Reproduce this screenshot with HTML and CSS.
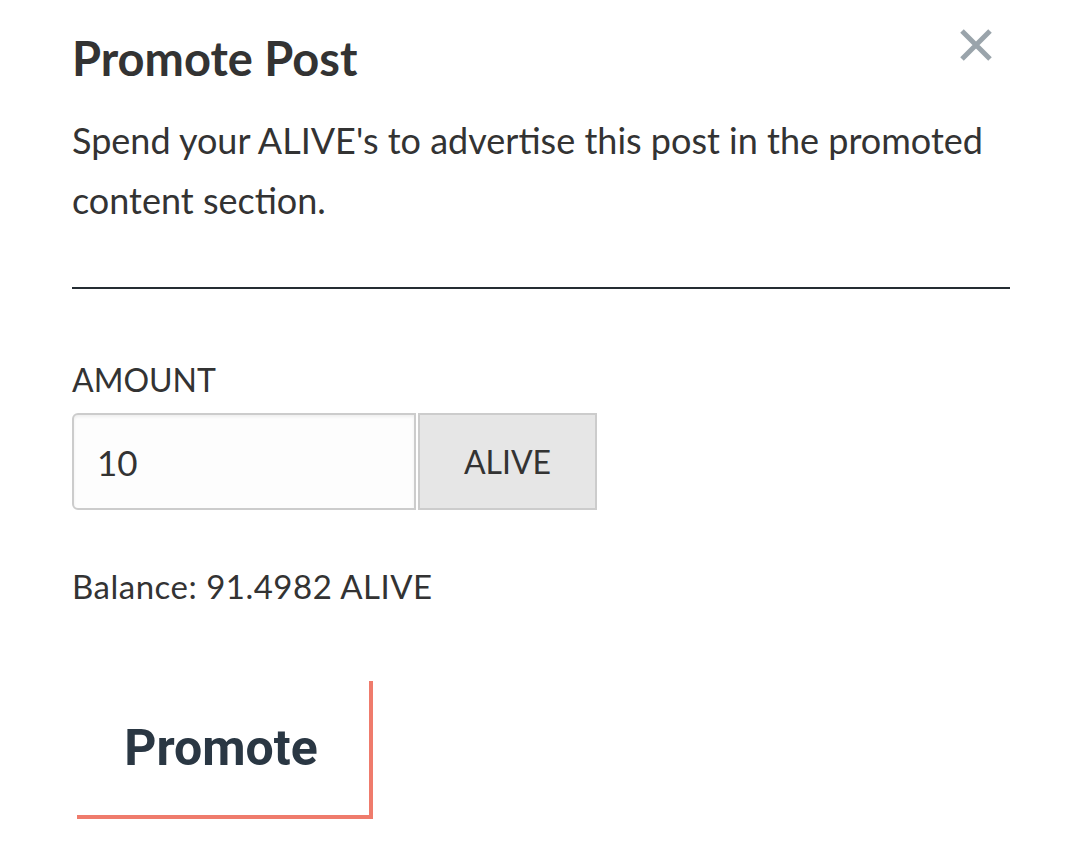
FILE: index.html
```html
<!DOCTYPE html>
<html>
<head>
<meta charset="utf-8">
<link rel="stylesheet" href="styles.css">
</head>
<body>
<div class="modal">
  <div class="header">
    <h1 class="title">Promote Post</h1>
    <button class="close" aria-label="Close">
      <svg width="34" height="34" viewBox="0 0 34 34"><path d="M3 3 L31 31 M31 3 L3 31" stroke="#9aa4ab" stroke-width="5" stroke-linecap="butt"/></svg>
    </button>
  </div>
  <p class="desc">Spend your ALIVE's to advertise this post in the promoted content section.</p>
  <hr class="divider">
  <label class="label">AMOUNT</label>
  <div class="input-group">
    <div class="input">10</div>
    <div class="addon">ALIVE</div>
  </div>
  <p class="balance">Balance: 91.4982 ALIVE</p>
  <div class="btn-wrap">
    <button class="promote">Promote</button>
  </div>
</div>
</body>
</html>
```
FILE: styles.css
```css
html, body {
  margin: 0;
  padding: 0;
  background: #ffffff;
}
body {
  font-family: "Lato", "Liberation Sans", sans-serif;
  color: #333333;
}
.modal {
  padding: 0 70px 0 72px;
  display: flex;
  flex-direction: column;
  align-items: flex-start;
}
.header {
  align-self: stretch;
  display: flex;
  justify-content: space-between;
  align-items: flex-start;
}
.title {
  margin: 28px 0 0 0;
  font-size: 47px;
  line-height: 60px;
  font-weight: 700;
  color: #333333;
}
.close {
  margin: 28px 17px 0 0;
  padding: 0;
  border: 0;
  background: transparent;
  width: 34px;
  height: 34px;
}
.close svg { display: block; }
.desc {
  margin: 22px 0 0 0;
  font-size: 36px;
  line-height: 60px;
  color: #333333;
}
.divider {
  align-self: stretch;
  margin: 57px 0 0 0;
  border: 0;
  height: 2px;
  background: #252d33;
}
.label {
  margin-top: 71px;
  font-size: 32px;
  line-height: 40px;
  color: #333333;
}
.input-group {
  margin-top: 13px;
  display: flex;
  height: 97px;
}
.input {
  width: 344px;
  box-sizing: border-box;
  border: 2px solid #cccccc;
  border-radius: 6px 0 0 6px;
  background: #fdfdfd;
  box-shadow: inset 0 2px 3px rgba(0,0,0,0.06);
  padding-left: 23px;
  display: flex;
  align-items: center;
  font-size: 35px;
  color: #333333;
}
.addon {
  width: 179px;
  box-sizing: border-box;
  border: 2px solid #cccccc;
  margin-left: 2px;
  background: #e6e6e6;
  display: flex;
  align-items: center;
  justify-content: center;
  font-size: 32px;
  color: #333333;
}
.balance {
  margin: 56px 0 0 0;
  font-size: 33px;
  letter-spacing: 0.5px;
  line-height: 40px;
  color: #333333;
}
.btn-wrap {
  margin-top: 75px;
  margin-left: 5px;
}
.promote {
  width: 296px;
  height: 138px;
  box-sizing: border-box;
  border: 0;
  border-right: 4px solid #ef7b6c;
  border-bottom: 4px solid #ef7b6c;
  background: transparent;
  font-family: "Roboto", "Liberation Sans", sans-serif;
  font-weight: 700;
  font-size: 50px;
  color: #2a3743;
  padding: 0 4px 0 0;
  text-align: center;
}
```
